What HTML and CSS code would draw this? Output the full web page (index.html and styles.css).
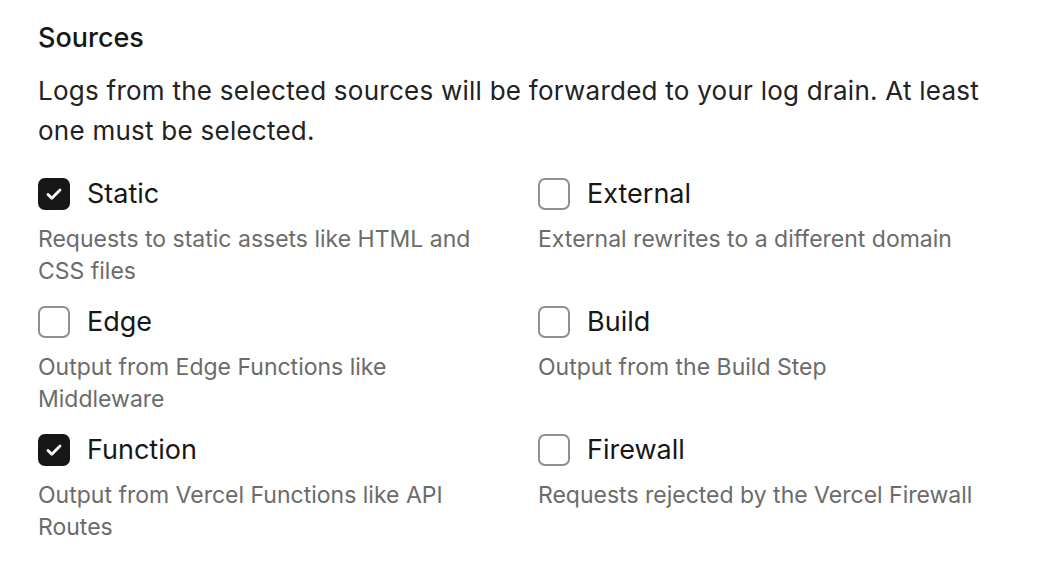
FILE: index.html
```html
<!DOCTYPE html>
<html lang="en">
<head>
    <meta charset="UTF-8">
    <meta name="viewport" content="width=device-width, initial-scale=1.0">
    <title>Sources</title>
    <link rel="stylesheet" href="styles.css">
</head>
<body>
    <div class="section">
        <h2 class="section-title">Sources</h2>
        <p class="section-desc">Logs from the selected sources will be forwarded to your log drain. At least one must be selected.</p>

        <div class="source-grid">
            <label class="source">
                <span class="source-head">
                    <span class="checkbox checked">
                        <svg viewBox="0 0 32 32" width="32" height="32"><path d="M10 16.5l3.8 3.8L22 12" fill="none" stroke="#fff" stroke-width="2.8" stroke-linecap="round" stroke-linejoin="round"/></svg>
                    </span>
                    <span class="source-name">Static</span>
                </span>
                <span class="source-info">Requests to static assets like HTML and CSS files</span>
            </label>
            <label class="source">
                <span class="source-head">
                    <span class="checkbox"></span>
                    <span class="source-name">External</span>
                </span>
                <span class="source-info">External rewrites to a different domain</span>
            </label>
            <label class="source">
                <span class="source-head">
                    <span class="checkbox"></span>
                    <span class="source-name">Edge</span>
                </span>
                <span class="source-info">Output from Edge Functions like Middleware</span>
            </label>
            <label class="source">
                <span class="source-head">
                    <span class="checkbox"></span>
                    <span class="source-name">Build</span>
                </span>
                <span class="source-info">Output from the Build Step</span>
            </label>
            <label class="source">
                <span class="source-head">
                    <span class="checkbox checked">
                        <svg viewBox="0 0 32 32" width="32" height="32"><path d="M10 16.5l3.8 3.8L22 12" fill="none" stroke="#fff" stroke-width="2.8" stroke-linecap="round" stroke-linejoin="round"/></svg>
                    </span>
                    <span class="source-name">Function</span>
                </span>
                <span class="source-info">Output from Vercel Functions like API Routes</span>
            </label>
            <label class="source">
                <span class="source-head">
                    <span class="checkbox"></span>
                    <span class="source-name">Firewall</span>
                </span>
                <span class="source-info">Requests rejected by the Vercel Firewall</span>
            </label>
        </div>
    </div>
</body>
</html>
```

FILE: styles.css
```css
body {
    margin: 0;
    background: #fff;
    font-family: Inter, 'Noto Sans', sans-serif;
    color: #171717;
}

.section {
    padding: 20px 0 0 38px;
    width: 960px;
}

.section-title {
    margin: 0;
    font-size: 27px;
    line-height: 36px;
    font-weight: 500;
}

.section-desc {
    margin: 15px 0 0;
    font-size: 26px;
    line-height: 40px;
    letter-spacing: 0.25px;
    color: #222;
}

.source-grid {
    display: grid;
    grid-template-columns: 460px 460px;
    column-gap: 40px;
    row-gap: 19px;
    margin-top: 27px;
}

.source {
    display: flex;
    flex-direction: column;
    cursor: pointer;
}

.source-head {
    display: flex;
    align-items: center;
    gap: 17px;
    height: 32px;
}

.checkbox {
    width: 32px;
    height: 32px;
    box-sizing: border-box;
    border: 2px solid #8f8f8f;
    border-radius: 7px;
    flex-shrink: 0;
    display: flex;
}

.checkbox.checked {
    background: #171717;
    border-color: #171717;
}

.checkbox svg {
    margin: -2px;
}

.source-name {
    font-size: 27px;
    line-height: 32px;
}

.source-info {
    margin-top: 13px;
    font-size: 23px;
    line-height: 32px;
    color: #6b6b6b;
}
```
